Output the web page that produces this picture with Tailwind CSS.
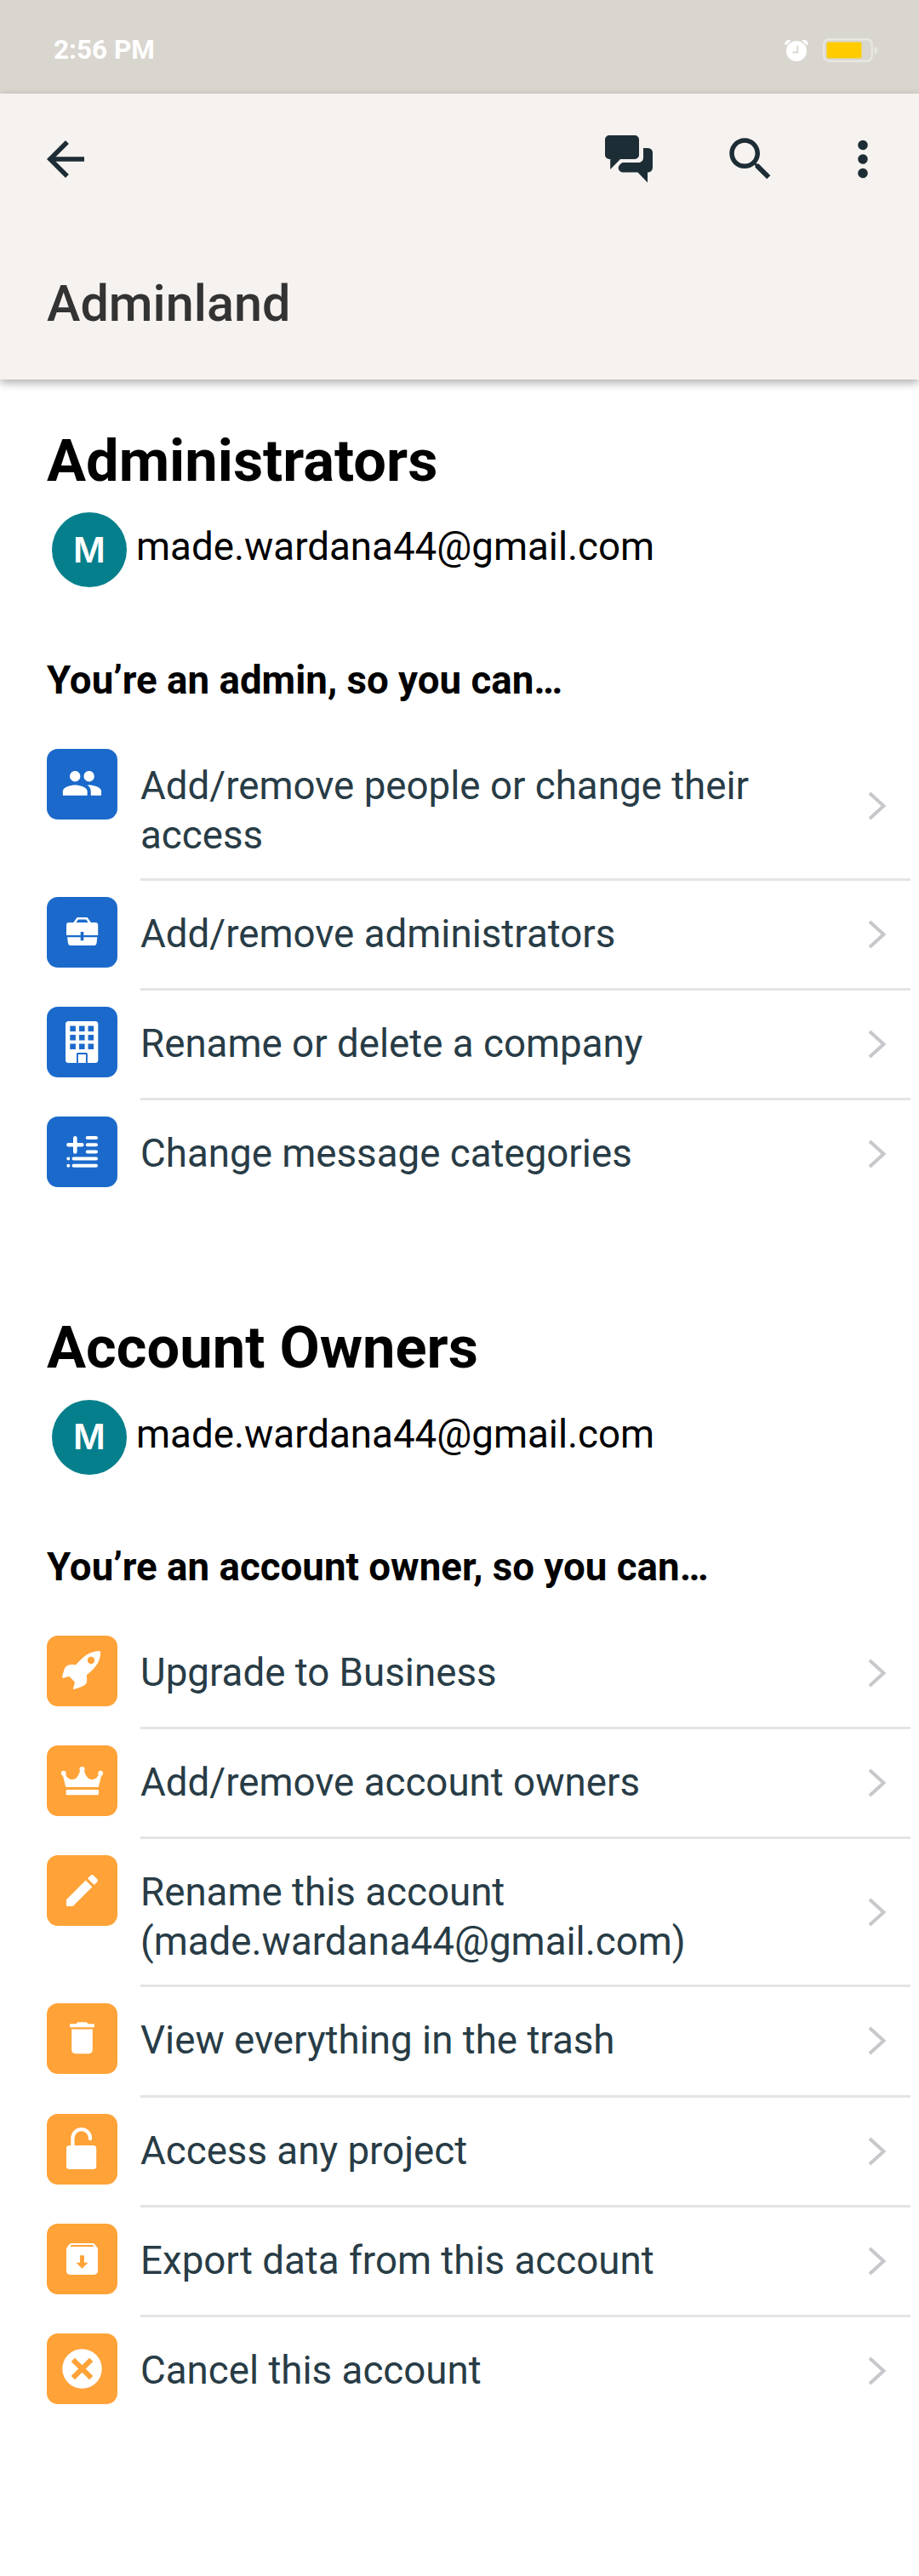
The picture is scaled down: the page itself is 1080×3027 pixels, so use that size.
<!DOCTYPE html>
<html lang="en">
<head>
<meta charset="utf-8">
<title>Adminland</title>
<script src="https://cdn.jsdelivr.net/npm/@tailwindcss/browser@4"></script>
</head>
<body class="bg-white font-['Roboto',sans-serif] text-black">
<svg class="hidden">
  <symbol id="chevron" viewBox="0 0 22 34"><path d="M2 2l16.500 15L2 32" fill="none" stroke="#c7c7cc" stroke-width="4"/></symbol>
</svg>
<div class="flex h-[3027px] w-[1080px] flex-col overflow-hidden">
  <!-- Status bar -->
  <div class="flex h-[110px] shrink-0 items-center justify-between bg-[#d9d6cf] pt-2 pr-12 pl-[63px]">
    <span class="text-[31.5px] leading-none font-bold text-white">2:56 PM</span>
    <div class="flex items-center gap-[17px]">
      <svg class="h-[27px] w-[28px]" viewBox="0 0 28 27" fill="#fff">
        <circle cx="14" cy="14" r="12"/>
        <path d="M1 6.500C0 3 3 .8 7 1.500L1.800 6.800zM27 6.500C28 3 25 .8 21 1.500l5.200 5.300z" stroke="#fff"/>
        <path d="M15.200 7.500v8H9.500" fill="none" stroke="#d9d6cf" stroke-width="1.800"/>
      </svg>
      <svg class="h-[28px] w-[65px]" viewBox="0 0 65 28">
        <rect x="1.200" y="1.200" width="56.500" height="25.500" rx="6" fill="none" stroke="#e8e6e2" stroke-width="2.400"/>
        <rect x="4.500" y="4.500" width="41" height="19" rx="2" fill="#fc0"/>
        <path d="M60.500 9.500c5 1.500 5 7.500 0 9z" fill="#e8e6e2"/>
      </svg>
    </div>
  </div>
  <!-- App bar -->
  <header class="relative h-[336px] shrink-0 bg-[#f6f2ef] shadow-[0_4px_10px_rgba(0,0,0,0.32)]">
    <div class="flex h-[154px] items-center justify-between pr-[33px] pl-11 text-[#1d2d35]">
      <svg class="size-[66px]" viewBox="0 0 24 24" fill="currentColor"><path d="M20 11H7.830l5.590-5.590L12 4l-8 8 8 8 1.410-1.410L7.830 13H20v-2z"/></svg>
      <div class="flex items-center">
        <svg class="mr-[82px] h-[56px] w-[56px]" viewBox="0 0 56 56" fill="currentColor">
          <path d="M5 0h30a5 5 0 0 1 5 5v18a5 5 0 0 1-5 5H18L6.200 40V28H5a5 5 0 0 1-5-5V5a5 5 0 0 1 5-5z"/>
          <path d="M45 15h5.500a5.500 5.500 0 0 1 5.500 5.500V38a5.500 5.500 0 0 1-5.500 5.500H50v12L38.500 43.600H21.500c-3.500 0-5.800-2.600-5.800-5.300 0-2 2.800-6.300 5.800-6.300H39c4 0 6-2.500 6-6z"/>
        </svg>
        <svg class="mr-[66px] size-[66px]" viewBox="0 0 24 24" fill="currentColor"><path d="M15.500 14h-.79l-.28-.27C15.410 12.590 16 11.110 16 9.500 16 5.910 13.090 3 9.500 3S3 5.910 3 9.500 5.910 16 9.500 16c1.610 0 3.090-.59 4.230-1.570l.27.28v.79l5 4.990L20.490 19l-4.990-5zm-6 0C7.010 14 5 11.990 5 9.500S7.010 5 9.500 5 14 7.010 14 9.500 11.990 14 9.500 14z"/></svg>
        <svg class="size-[66px]" viewBox="0 0 24 24" fill="currentColor"><circle cx="12" cy="6" r="2.100"/><circle cx="12" cy="12" r="2.100"/><circle cx="12" cy="18" r="2.100"/></svg>
      </div>
    </div>
    <h1 class="flex h-[182px] items-center pt-1.5 pl-[55px] text-[59.4px] leading-none font-medium text-[#333]">Adminland</h1>
  </header>

  <!-- Administrators -->
  <section class="pt-14 pr-2.5 pl-[55px]">
    <h2 class="text-[68.6px] leading-[80px] font-bold">Administrators</h2>
    <div class="mt-5 ml-1.5 flex h-[88px]">
      <span class="flex size-[88px] items-center justify-center rounded-full bg-[#067f8c] font-['Inter',sans-serif] text-[41px] leading-none font-semibold text-white">M</span>
      <span class="ml-[11px] h-20 text-[45.7px] leading-[82px]">made.wardana44@gmail.com</span>
    </div>
    <h3 class="mt-[81px] text-[45.7px] leading-[58px] font-bold">You’re an admin, so you can…</h3>
    <ul class="mt-8 text-[45.7px] leading-[58px] text-[#283c46]">
      <li class="flex">
        <span class="mt-[19px] mr-[27px] size-[83px] shrink-0 rounded-[13px] bg-[#1b6acb]">
          <svg class="size-full" viewBox="0 0 83 83" fill="#fff"><path transform="translate(16.800 15.800) scale(2.055)" d="M16 11c1.660 0 2.990-1.340 2.990-3S17.660 5 16 5c-1.660 0-3 1.340-3 3s1.340 3 3 3zm-8 0c1.660 0 2.990-1.340 2.990-3S9.660 5 8 5C6.340 5 5 6.340 5 8s1.340 3 3 3zm0 2c-2.330 0-7 1.170-7 3.500V19h14v-2.500c0-2.330-4.670-3.500-7-3.500zm8 0c-.29 0-.62.020-.97.050 1.160.84 1.970 1.970 1.970 3.450V19h6v-2.500c0-2.330-4.670-3.500-7-3.500z"/></svg>
        </span>
        <div class="flex grow items-center border-b-3 border-[#e4e4e4]">
          <span class="h-[171px] w-[760px] pt-[33.5px]">Add/remove people or change their access</span>
          <svg class="mr-7 ml-auto h-[34px] w-[22px]"><use href="#chevron"/></svg>
        </div>
      </li>
      <li class="flex h-[129.2px]">
        <span class="mt-[19px] mr-[27px] size-[83px] shrink-0 rounded-[13px] bg-[#1b6acb]">
          <svg class="size-full" viewBox="0 0 83 83" fill="#fff">
            <path d="M32.500 30.500l3.800-5.300h10.600l3.800 5.300" fill="none" stroke="#fff" stroke-width="2.600"/>
            <path d="M26 30h31.200a3 3 0 0 1 3 3V45H43.300V41h-3.600v4H23V33a3 3 0 0 1 3-3z"/>
            <path d="M24 47.300h15.700v3.900h3.600v-3.900H59.300l-.8 7.200a3 3 0 0 1-3 2.500H28a3 3 0 0 1-3-2.500z"/>
          </svg>
        </span>
        <div class="flex grow items-center border-b-3 border-[#e4e4e4]">
          <span class="h-[126px] pt-[34px]">Add/remove administrators</span>
          <svg class="mr-7 ml-auto h-[34px] w-[22px]"><use href="#chevron"/></svg>
        </div>
      </li>
      <li class="flex h-[129.2px]">
        <span class="mt-[19px] mr-[27px] size-[83px] shrink-0 rounded-[13px] bg-[#1b6acb]">
          <svg class="size-full" viewBox="0 0 83 83">
            <rect x="22" y="17" width="38.300" height="49" rx="3.500" fill="#fff"/>
            <path d="M27.300 22.500h6.600v6.600h-6.600zM38 22.500h6.600v6.600H38zM48.500 22.500h6.600v6.600h-6.600zM27.300 33h6.600v6.600h-6.600zM38 33h6.600v6.600H38zM48.500 33h6.600v6.600h-6.600zM27.300 43.500h6.600v6.600h-6.600zM38 43.500h6.600v6.600H38zM48.500 43.500h6.600v6.600h-6.600z" fill="#1b6acb"/>
            <path d="M35.900 66V55.600a.6.600 0 0 1 .6-.6h9.800a.6.600 0 0 1 .6.600V66" fill="none" stroke="#1b6acb" stroke-width="1.900"/>
          </svg>
        </span>
        <div class="flex grow items-center border-b-3 border-[#e4e4e4]">
          <span class="h-[126px] pt-[34px]">Rename or delete a company</span>
          <svg class="mr-7 ml-auto h-[34px] w-[22px]"><use href="#chevron"/></svg>
        </div>
      </li>
      <li class="flex h-[129.2px]">
        <span class="mt-[19px] mr-[27px] size-[83px] shrink-0 rounded-[13px] bg-[#1b6acb]">
          <svg class="size-full" viewBox="0 0 83 83" fill="none" stroke="#fff" stroke-width="4" stroke-linecap="round"><path d="M33.300 25.200v16.200M25.400 33.200h15.900" stroke-width="4.600"/><path d="M47.700 25H58M47.700 33.200H58M47.700 41.400H58M31.500 49.600H58M31.500 57.800H58M25.300 49.600h.01M25.300 57.800h.01"/></svg>
        </span>
        <div class="flex grow items-center border-b-3 border-transparent">
          <span class="h-[126px] pt-[34px]">Change message categories</span>
          <svg class="mr-7 ml-auto h-[34px] w-[22px]"><use href="#chevron"/></svg>
        </div>
      </li>
    </ul>
  </section>

  <!-- Account owners -->
  <section class="pt-[121.4px] pr-2.5 pl-[55px]">
    <h2 class="text-[68.6px] leading-[80px] font-bold">Account Owners</h2>
    <div class="mt-[21px] ml-1.5 flex h-[88px]">
      <span class="flex size-[88px] items-center justify-center rounded-full bg-[#067f8c] font-['Inter',sans-serif] text-[41px] leading-none font-semibold text-white">M</span>
      <span class="ml-[11px] h-20 text-[45.7px] leading-[82px]">made.wardana44@gmail.com</span>
    </div>
    <h3 class="mt-20 text-[45.7px] leading-[58px] font-bold">You’re an account owner, so you can…</h3>
    <ul class="mt-8 text-[45.7px] leading-[58px] text-[#283c46]">
      <li class="flex h-[129.2px]">
        <span class="mt-[19px] mr-[27px] size-[83px] shrink-0 rounded-[13px] bg-[#ffa237]">
          <svg class="size-full" viewBox="0 0 83 83" fill="#fff"><path fill-rule="evenodd" d="M63 18.800C63.500 25 61.500 31 57 36.500c-3 3.800-6.500 6.800-10.200 9.800.5 3.700.6 6.700-.1 9.500C44.500 59.500 37 61.800 31.800 63c-.7 0-1-.4-.8-1.100l1.800-6.300c.2-1-.3-1.500-1-2.200l-4.200-4.400c-.6-.7-1.200-1-2-.9l-5.800 1.600c-1.200.3-1.900-.2-1.600-1.400.7-3.500 1.500-6.500 3-10 1.900-4.200 6.500-4.800 12.800-3.900C42 25.500 49 18.500 62 18c.7 0 1 .3 1 .8zM52 24.800a4.200 4.200 0 1 0 0 8.400 4.200 4.200 0 0 0 0-8.400z"/></svg>
        </span>
        <div class="flex grow items-center border-b-3 border-[#e4e4e4]">
          <span class="h-[126px] pt-[34px]">Upgrade to Business</span>
          <svg class="mr-7 ml-auto h-[34px] w-[22px]"><use href="#chevron"/></svg>
        </div>
      </li>
      <li class="flex h-[129.2px]">
        <span class="mt-[19px] mr-[27px] size-[83px] shrink-0 rounded-[13px] bg-[#ffa237]">
          <svg class="size-full" viewBox="0 0 83 83" fill="#fff">
            <circle cx="19.700" cy="32.700" r="2.900"/><circle cx="41.500" cy="28" r="3.100"/><circle cx="63.200" cy="32.700" r="2.900"/>
            <path d="M22.300 49L18.500 34l3.500-.5c1 4 4 6.500 8 6.500 5 0 7.500-5 9.300-10.500h4.400C45.500 35 48 40 53 40c4 0 7-2.500 8-6.500l3.500.5L60.800 49z"/>
            <rect x="22.600" y="52" width="38.400" height="6.300" rx="1.300"/>
          </svg>
        </span>
        <div class="flex grow items-center border-b-3 border-[#e4e4e4]">
          <span class="h-[126px] pt-[34px]">Add/remove account owners</span>
          <svg class="mr-7 ml-auto h-[34px] w-[22px]"><use href="#chevron"/></svg>
        </div>
      </li>
      <li class="flex">
        <span class="mt-[19px] mr-[27px] size-[83px] shrink-0 rounded-[13px] bg-[#ffa237]">
          <svg class="size-full" viewBox="0 0 83 83" fill="#fff"><path transform="translate(16.800 16.800) scale(2.055)" d="M3 17.250V21h3.750L17.810 9.940l-3.750-3.750L3 17.250zM20.710 7.040c.39-.39.39-1.020 0-1.410l-2.340-2.340c-.39-.39-1.020-.39-1.410 0l-1.830 1.830 3.750 3.750 1.830-1.830z"/></svg>
        </span>
        <div class="flex grow items-center border-b-3 border-[#e4e4e4]">
          <span class="h-[171px] w-[760px] pt-[34px]">Rename this account (made.wardana44@gmail.com)</span>
          <svg class="mr-7 ml-auto h-[34px] w-[22px]"><use href="#chevron"/></svg>
        </div>
      </li>
      <li class="flex h-[129.2px]">
        <span class="mt-[19px] mr-[27px] size-[83px] shrink-0 rounded-[13px] bg-[#ffa237]">
          <svg class="size-full" viewBox="0 0 83 83" fill="#fff"><path transform="translate(16.800 16) scale(2.055)" d="M6 19c0 1.100.9 2 2 2h8c1.100 0 2-.9 2-2V7H6v12zM19 4h-3.500l-1-1h-5l-1 1H5v2h14V4z"/></svg>
        </span>
        <div class="flex grow items-center border-b-3 border-[#e4e4e4]">
          <span class="h-[126px] pt-[34px]">View everything in the trash</span>
          <svg class="mr-7 ml-auto h-[34px] w-[22px]"><use href="#chevron"/></svg>
        </div>
      </li>
      <li class="flex h-[129.2px]">
        <span class="mt-[19px] mr-[27px] size-[83px] shrink-0 rounded-[13px] bg-[#ffa237]">
          <svg class="size-full" viewBox="0 0 83 83" fill="#fff">
            <rect x="23" y="37" width="35.200" height="28" rx="3.500"/>
            <path d="M30.400 39V28.500a10.300 10.300 0 0 1 20.600 0v.7" fill="none" stroke="#fff" stroke-width="4.200" stroke-linecap="round"/>
          </svg>
        </span>
        <div class="flex grow items-center border-b-3 border-[#e4e4e4]">
          <span class="h-[126px] pt-[34px]">Access any project</span>
          <svg class="mr-7 ml-auto h-[34px] w-[22px]"><use href="#chevron"/></svg>
        </div>
      </li>
      <li class="flex h-[129.2px]">
        <span class="mt-[19px] mr-[27px] size-[83px] shrink-0 rounded-[13px] bg-[#ffa237]">
          <svg class="size-full" viewBox="0 0 83 83" fill="#fff"><path fill-rule="evenodd" transform="translate(16.800 16.800) scale(2.055)" d="M20.540 5.230l-1.390-1.680C18.880 3.210 18.470 3 18 3H6c-.47 0-.88.210-1.160.55L3.460 5.230C3.170 5.570 3 6.020 3 6.500V19c0 1.100.9 2 2 2h14c1.100 0 2-.9 2-2V6.500c0-.48-.17-.93-.46-1.270zM12 17.500L8.600 14.100h2.200V9.900h2.400v4.200h2.200L12 17.500zM5.120 5l.81-1h12l.94 1H5.120z"/></svg>
        </span>
        <div class="flex grow items-center border-b-3 border-[#e4e4e4]">
          <span class="h-[126px] pt-[34px]">Export data from this account</span>
          <svg class="mr-7 ml-auto h-[34px] w-[22px]"><use href="#chevron"/></svg>
        </div>
      </li>
      <li class="flex h-[129.2px]">
        <span class="mt-[19px] mr-[27px] size-[83px] shrink-0 rounded-[13px] bg-[#ffa237]">
          <svg class="size-full" viewBox="0 0 83 83"><circle cx="41.500" cy="41.500" r="23.200" fill="#fff"/><path d="M30.800 30.800l21.400 21.400M52.200 30.800L30.800 52.200" stroke="#ffa237" stroke-width="6"/></svg>
        </span>
        <div class="flex grow items-center border-b-3 border-transparent">
          <span class="h-[126px] pt-[34px]">Cancel this account</span>
          <svg class="mr-7 ml-auto h-[34px] w-[22px]"><use href="#chevron"/></svg>
        </div>
      </li>
    </ul>
  </section>
</div>
</body>
</html>
